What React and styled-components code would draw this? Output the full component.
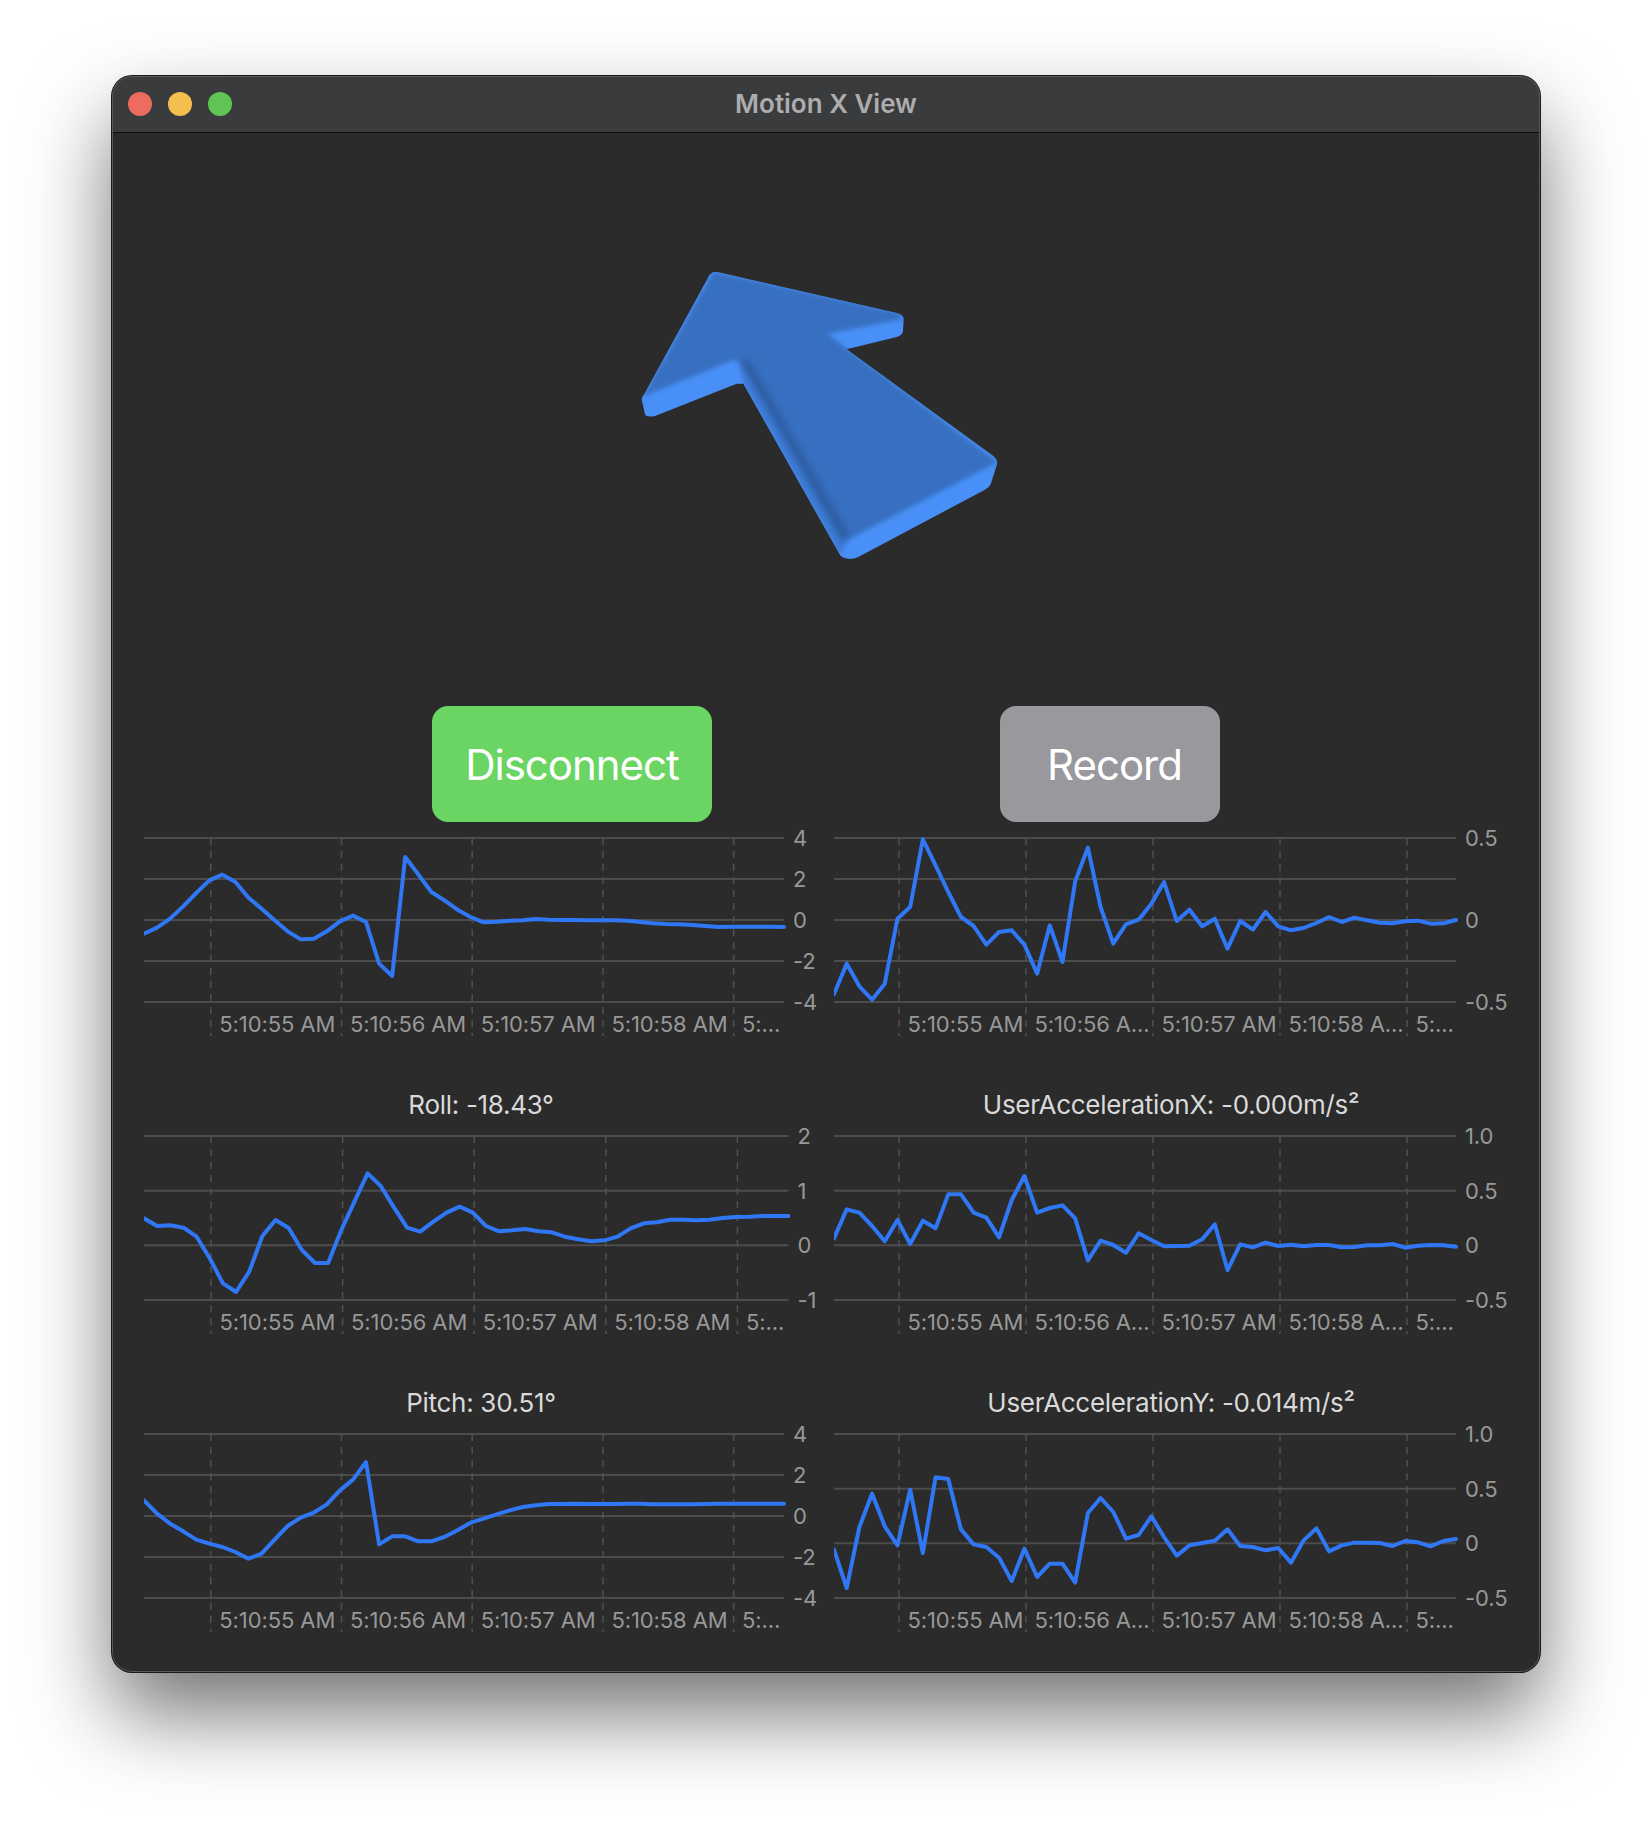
import React from "react";
import styled, { createGlobalStyle } from "styled-components";

const GlobalStyle = createGlobalStyle`
  html, body { margin: 0; padding: 0; background: #ffffff; }
  body { font-family: Inter, "Liberation Sans", sans-serif; }
`;

const Page = styled.div`
  min-height: 1822px;
  box-sizing: border-box;
  padding: 76px 112px 0;
`;

const Window = styled.div`
  position: relative;
  width: 1428px;
  box-sizing: border-box;
  border-radius: 20px;
  overflow: hidden;
  background: #2b2b2b;
  box-shadow: 0 0 0 1px #1a1a1a, 0 42px 84px rgba(0, 0, 0, 0.55);

  &::after {
    content: "";
    position: absolute;
    inset: 0;
    border: 1px solid #5a5a5a;
    border-radius: 20px;
    pointer-events: none;
  }
`;

const TitleBar = styled.div`
  position: relative;
  height: 57px;
  display: flex;
  align-items: center;
  justify-content: center;
  background: #3a3b3d;
  border-bottom: 1px solid #0e0e0e;
  box-sizing: border-box;
`;

const Lights = styled.div`
  position: absolute;
  left: 16px;
  top: 16px;
  display: flex;
  gap: 16px;
`;

const Light = styled.span`
  width: 24px;
  height: 24px;
  border-radius: 50%;
  background: ${(p) => p.$color};
`;

const WindowTitle = styled.div`
  padding-bottom: 2px;
  color: #adadae;
  font-size: 26px;
  font-weight: 600;
`;

const Scene = styled.div`
  height: 573px;
  display: flex;
  align-items: center;
  justify-content: center;
`;

const ButtonRow = styled.div`
  display: flex;
  justify-content: center;
  gap: 288px;
`;

const ActionButton = styled.button`
  height: 116px;
  width: ${(p) => p.$width}px;
  padding: 0 0 0 ${(p) => p.$inset || 0}px;
  border: none;
  border-radius: 16px;
  background: ${(p) => p.$color};
  color: #ffffff;
  font-family: inherit;
  font-size: 42px;
  letter-spacing: -1px;
`;

const Charts = styled.div`
  display: grid;
  grid-template-columns: 674px 674px;
  column-gap: 16px;
  row-gap: 55px;
  padding: 2px 32px 40px;
`;

const ChartBlock = styled.div`
  display: flex;
  flex-direction: column;
  gap: 3px;
`;

const ChartTitle = styled.div`
  height: 28px;
  line-height: 28px;
  text-align: center;
  color: #d9d9d9;
  font-size: 26px;
  letter-spacing: -0.3px;
`;

const ChartSvg = styled.svg`
  display: block;
`;

const GridLine = styled.line`
  stroke: #4c4c4c;
  stroke-width: 2;
`;

const TimeLine = styled.line`
  stroke: #505050;
  stroke-width: 1.5;
  stroke-dasharray: 7 6;
`;

const Series = styled.polyline`
  fill: none;
  stroke: #3077f5;
  stroke-width: 4;
  stroke-linejoin: round;
  stroke-linecap: round;
`;

const Tick = styled.text`
  fill: #989898;
  font-size: 22px;
  letter-spacing: -0.1px;
`;

const PLOT_TOP = 14;
const PLOT_H = 164;
const SVG_H = 212;

const wideTimes = ["5:10:55 AM", "5:10:56 AM", "5:10:57 AM", "5:10:58 AM", "5:..."];
const narrowTimes = ["5:10:55 AM", "5:10:56 A...", "5:10:57 AM", "5:10:58 A...", "5:..."];

const charts = [
  {
    plotW: 640, first: 66.8, step: 130.7, times: wideTimes, top: 443, labels: ["4", "2", "0", "-2", "-4"],
    data: [730, 712, 685, 648, 608, 570, 553, 575, 622, 655, 690, 723, 747, 745, 723, 693, 676, 695, 820, 857, 500, 552, 605, 630, 658, 680, 696, 694, 691, 690, 686, 688, 689, 689, 690, 690, 690, 691, 695, 699, 701, 702, 704, 707, 710, 709, 709, 709, 709, 710],
  },
  {
    plotW: 622, first: 65, step: 127, times: narrowTimes, top: 443, labels: ["0.5", "", "0", "", "-0.5"],
    data: [912, 820, 888, 928, 880, 685, 650, 447, 525, 605, 680, 707, 763, 725, 720, 763, 850, 705, 815, 573, 472, 650, 760, 702, 688, 640, 575, 692, 658, 708, 685, 775, 692, 718, 665, 708, 720, 713, 698, 680, 695, 682, 690, 697, 699, 693, 691, 700, 699, 689],
  },
  {
    title: "Roll: -18.43°", plotW: 644.5, first: 67, step: 131.6, times: wideTimes, top: 168, labels: ["2", "1", "0", "-1"],
    data: [415, 438, 436, 443, 470, 535, 610, 636, 575, 468, 420, 444, 510, 549, 549, 450, 365, 280, 318, 382, 443, 455, 425, 398, 380, 398, 438, 454, 451, 447, 454, 457, 470, 478, 484, 481, 470, 445, 430, 427, 419, 419, 421, 419, 414, 411, 410, 408, 408, 408],
  },
  {
    title: "UserAccelerationX: -0.000m/s²", plotW: 622, first: 65, step: 127, times: narrowTimes, top: 168, labels: ["1.0", "0.5", "0", "-0.5"],
    data: [475, 388, 398, 438, 484, 420, 492, 422, 445, 343, 343, 398, 413, 472, 360, 288, 398, 384, 376, 415, 541, 482, 495, 518, 460, 480, 499, 498, 497, 478, 433, 570, 493, 502, 488, 498, 494, 499, 495, 495, 502, 501, 496, 496, 492, 503, 497, 495, 496, 500],
  },
  {
    title: "Pitch: 30.51°", plotW: 640, first: 66.8, step: 130.7, times: wideTimes, top: 161, labels: ["4", "2", "0", "-2", "-4"],
    data: [360, 400, 430, 453, 478, 490, 500, 515, 535, 520, 478, 437, 412, 397, 372, 330, 298, 245, 492, 468, 468, 483, 483, 470, 450, 427, 415, 402, 390, 380, 375, 371, 371, 370, 371, 371, 371, 370, 370, 372, 372, 372, 372, 371, 370, 370, 370, 370, 370, 370],
  },
  {
    title: "UserAccelerationY: -0.014m/s²", plotW: 622, first: 65, step: 127, times: narrowTimes, top: 161, labels: ["1.0", "0.5", "0", "-0.5"],
    data: [508, 623, 440, 340, 438, 495, 328, 518, 291, 296, 447, 492, 500, 532, 602, 505, 590, 550, 550, 607, 398, 353, 395, 475, 464, 408, 470, 526, 495, 488, 481, 447, 497, 500, 510, 503, 547, 480, 444, 513, 495, 487, 487, 488, 497, 482, 486, 498, 482, 476],
  },
];

const LineChart = ({ title, plotW, first, step, times, top, labels, data }) => {
  const rows = labels.length;
  const points = data
    .map((v, i) => `${(i * plotW) / (data.length - 1)},${PLOT_TOP + (v - top) / 3}`)
    .join(" ");

  return (
    <ChartBlock>
      {title && <ChartTitle>{title}</ChartTitle>}
      <ChartSvg width="674" height={SVG_H}>
        {labels.map((label, i) => {
          const y = PLOT_TOP + (i * PLOT_H) / (rows - 1);
          return (
            <g key={i}>
              <GridLine x1="0" x2={plotW} y1={y} y2={y} />
              <Tick x={plotW + 9} y={y + 8}>{label}</Tick>
            </g>
          );
        })}
        {times.map((time, i) => {
          const x = first + i * step;
          return (
            <g key={i}>
              <TimeLine x1={x} x2={x} y1={PLOT_TOP} y2={SVG_H} />
              <Tick x={x + 8.5} y={PLOT_TOP + PLOT_H + 30}>{time}</Tick>
            </g>
          );
        })}
        <Series points={points} />
      </ChartSvg>
    </ChartBlock>
  );
};

const silhouette =
  "M264,80 Q272,60 295,64 L830,186 Q851,190 851,205 L849,240 Q847,254 830,258 L680,295 L1120,615 Q1134,628 1131,640 L1112,700 Q1108,710 1095,716 L715,918 Q685,932 662,915 L370,398 L350,398 L105,495 Q80,500 75,490 L65,445 Q66,438 75,425 Z";

const Arrow = () => (
  <svg width="412" height="338" viewBox="0 0 1236 1014">
    <defs>
      <clipPath id="arrow-shape">
        <path d={silhouette} />
      </clipPath>
      <filter id="soft-edge" x="-10%" y="-10%" width="120%" height="120%">
        <feGaussianBlur stdDeviation="7" />
      </filter>
      <filter id="soft-shade" x="-20%" y="-20%" width="140%" height="140%">
        <feGaussianBlur stdDeviation="9" />
      </filter>
    </defs>
    <path d={silhouette} fill="#4890f7" />
    <g clipPath="url(#arrow-shape)">
      <polygon points="370,398 660,915 684,868 360,335" fill="#3d7bd6" filter="url(#soft-edge)" />
      <polygon
        points="280,62 838,186 850,204 622,248 1132,633 680,868 360,332 340,328 95,425 66,442"
        fill="#376fc1"
        filter="url(#soft-edge)"
      />
      <polygon points="356,325 392,332 690,850 664,872" fill="#2d5ea6" filter="url(#soft-shade)" />
    </g>
  </svg>
);

const App = () => (
  <Page>
    <GlobalStyle />
    <Window>
      <TitleBar>
        <Lights>
          <Light $color="#ee6b60" />
          <Light $color="#f5bf4f" />
          <Light $color="#61c555" />
        </Lights>
        <WindowTitle>Motion X View</WindowTitle>
      </TitleBar>
      <Scene>
        <Arrow />
      </Scene>
      <ButtonRow>
        <ActionButton $width={280} $color="#6bd563">Disconnect</ActionButton>
        <ActionButton $width={220} $inset={9} $color="#98989d">Record</ActionButton>
      </ButtonRow>
      <Charts>
        {charts.map((chart, i) => (
          <LineChart key={i} {...chart} />
        ))}
      </Charts>
    </Window>
  </Page>
);

export default App;
